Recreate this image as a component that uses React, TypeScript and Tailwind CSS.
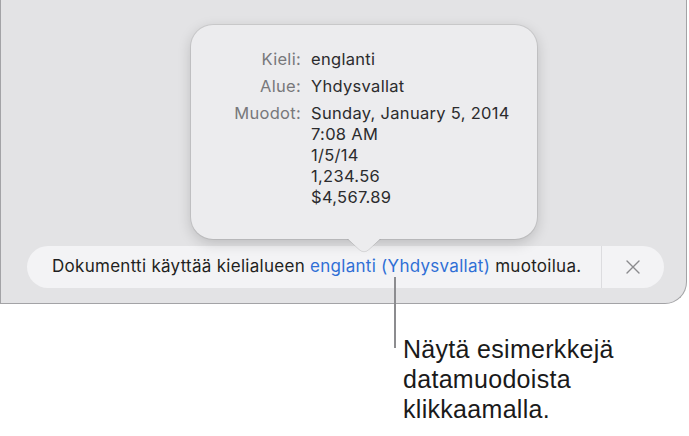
import React from 'react';

// --- Data ---

const FORMAT_ROWS = [
  { label: 'Kieli:', values: ['englanti'] },
  { label: 'Alue:', values: ['Yhdysvallat'] },
  { label: 'Muodot:', values: ['Sunday, January 5, 2014', '7:08 AM', '1/5/14', '1,234.56', '$4,567.89'] },
];

const FONT = "font-['Inter','Liberation_Sans',Arial,sans-serif]";

// --- Components ---

function FormatPopover() {
  return (
    <div className="absolute left-[190px] top-[25px] w-[346px] h-[214px] rounded-[22px] bg-[#ececee] shadow-[0_0_0_1px_rgba(0,0,0,0.08),0_4px_14px_rgba(0,0,0,0.18)] z-10">
      <div className="flex flex-col gap-[6px] pt-[24px]">
        {FORMAT_ROWS.map((row) => (
          <div key={row.label} className="flex text-[16.5px] leading-[21px] tracking-[0.3px]">
            <div className="w-[110px] text-right text-[#78787b]">{row.label}</div>
            <div className="ml-[10px] flex flex-col text-[#2b2b2d]">
              {row.values.map((v) => (
                <span key={v}>{v}</span>
              ))}
            </div>
          </div>
        ))}
      </div>
      {/* pointer towards the locale link */}
      <svg className="absolute left-[155px] top-[212px]" width="36" height="16" viewBox="0 0 36 16">
        <path d="M0 0 L13 12.5 Q18 17 23 12.5 L36 0 Z" fill="#ececee" />
        <path d="M0 0.5 L13 12.5 Q18 17 23 12.5 L36 0.5" fill="none" stroke="rgba(0,0,0,0.10)" strokeWidth="1" />
        <rect x="0" y="0" width="36" height="2" fill="#ececee" />
      </svg>
    </div>
  );
}

function LocaleBar() {
  return (
    <div className="flex items-center h-[42px] rounded-full bg-[#f3f3f5]">
      <div className="flex-1 pl-[25px] text-[17px] tracking-[0.28px] text-[#1f1f21] whitespace-nowrap">
        Dokumentti käyttää kielialueen{' '}
        <span className="text-[#2f6fd6]">englanti (Yhdysvallat)</span> muotoilua.
      </div>
      <div className="w-px self-stretch bg-[#dcdcdf]" />
      <div className="w-[62px] flex items-center justify-center">
        <svg width="14" height="14" viewBox="0 0 14 14">
          <path d="M1 1 L13 13 M13 1 L1 13" stroke="#8a8a8d" strokeWidth="1.4" strokeLinecap="round" />
        </svg>
      </div>
    </div>
  );
}

export default function App() {
  return (
    <div className={`relative w-[689px] h-[436px] bg-white overflow-hidden ${FONT}`}>
      {/* document window */}
      <div className="relative w-[687px] h-[304px] bg-[#e3e3e5] border-l border-r border-b border-[#a3a3a6] rounded-br-[22px] flex flex-col justify-end pb-[15px] pl-[26px] pr-[22px]">
        <FormatPopover />
        <LocaleBar />
      </div>

      {/* callout */}
      <div className="absolute left-[394px] top-[277px] w-[2px] h-[71px] bg-[#8c8c8f]" />
      <div className="ml-[403px] mt-[30px] font-['Liberation_Sans',Arial,sans-serif] text-[25px] leading-[30px] tracking-[0.3px] text-[#1a1a1a]">
        Näytä esimerkkejä
        <br />
        datamuodoista
        <br />
        klikkaamalla.
      </div>
    </div>
  );
}
